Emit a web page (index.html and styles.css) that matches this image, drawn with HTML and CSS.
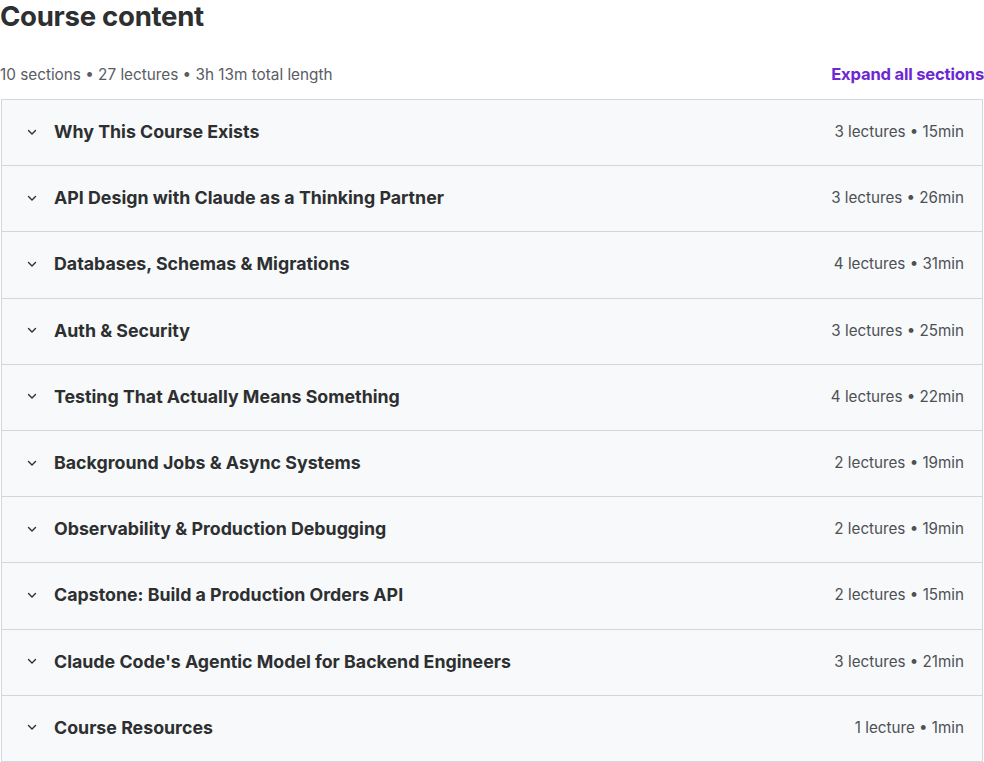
FILE: index.html
```html
<!DOCTYPE html>
<html>
<head>
<meta charset="utf-8">
<link rel="stylesheet" href="styles.css">
</head>
<body>
<div class="cc">
  <h2 class="cc-title">Course content</h2>
  <div class="cc-meta">
    <span class="cc-stats">10 sections • 27 lectures • 3h 13m total length</span>
    <button class="cc-expand">Expand all sections</button>
  </div>
  <div class="cc-list">
    <div class="sec"><span class="chev"><svg viewBox="0 0 12 12" width="12" height="12"><path d="M2.5 4.5 L6 8 L9.5 4.5" fill="none" stroke="#2d2f31" stroke-width="1.4" stroke-linecap="round" stroke-linejoin="round"/></svg></span><span class="sec-title">Why This Course Exists</span><span class="sec-info">3 lectures • 15min</span></div>
    <div class="sec"><span class="chev"><svg viewBox="0 0 12 12" width="12" height="12"><path d="M2.5 4.5 L6 8 L9.5 4.5" fill="none" stroke="#2d2f31" stroke-width="1.4" stroke-linecap="round" stroke-linejoin="round"/></svg></span><span class="sec-title">API Design with Claude as a Thinking Partner</span><span class="sec-info">3 lectures • 26min</span></div>
    <div class="sec"><span class="chev"><svg viewBox="0 0 12 12" width="12" height="12"><path d="M2.5 4.5 L6 8 L9.5 4.5" fill="none" stroke="#2d2f31" stroke-width="1.4" stroke-linecap="round" stroke-linejoin="round"/></svg></span><span class="sec-title">Databases, Schemas &amp; Migrations</span><span class="sec-info">4 lectures • 31min</span></div>
    <div class="sec"><span class="chev"><svg viewBox="0 0 12 12" width="12" height="12"><path d="M2.5 4.5 L6 8 L9.5 4.5" fill="none" stroke="#2d2f31" stroke-width="1.4" stroke-linecap="round" stroke-linejoin="round"/></svg></span><span class="sec-title">Auth &amp; Security</span><span class="sec-info">3 lectures • 25min</span></div>
    <div class="sec"><span class="chev"><svg viewBox="0 0 12 12" width="12" height="12"><path d="M2.5 4.5 L6 8 L9.5 4.5" fill="none" stroke="#2d2f31" stroke-width="1.4" stroke-linecap="round" stroke-linejoin="round"/></svg></span><span class="sec-title">Testing That Actually Means Something</span><span class="sec-info">4 lectures • 22min</span></div>
    <div class="sec"><span class="chev"><svg viewBox="0 0 12 12" width="12" height="12"><path d="M2.5 4.5 L6 8 L9.5 4.5" fill="none" stroke="#2d2f31" stroke-width="1.4" stroke-linecap="round" stroke-linejoin="round"/></svg></span><span class="sec-title">Background Jobs &amp; Async Systems</span><span class="sec-info">2 lectures • 19min</span></div>
    <div class="sec"><span class="chev"><svg viewBox="0 0 12 12" width="12" height="12"><path d="M2.5 4.5 L6 8 L9.5 4.5" fill="none" stroke="#2d2f31" stroke-width="1.4" stroke-linecap="round" stroke-linejoin="round"/></svg></span><span class="sec-title">Observability &amp; Production Debugging</span><span class="sec-info">2 lectures • 19min</span></div>
    <div class="sec"><span class="chev"><svg viewBox="0 0 12 12" width="12" height="12"><path d="M2.5 4.5 L6 8 L9.5 4.5" fill="none" stroke="#2d2f31" stroke-width="1.4" stroke-linecap="round" stroke-linejoin="round"/></svg></span><span class="sec-title">Capstone: Build a Production Orders API</span><span class="sec-info">2 lectures • 15min</span></div>
    <div class="sec"><span class="chev"><svg viewBox="0 0 12 12" width="12" height="12"><path d="M2.5 4.5 L6 8 L9.5 4.5" fill="none" stroke="#2d2f31" stroke-width="1.4" stroke-linecap="round" stroke-linejoin="round"/></svg></span><span class="sec-title">Claude Code's Agentic Model for Backend Engineers</span><span class="sec-info">3 lectures • 21min</span></div>
    <div class="sec"><span class="chev"><svg viewBox="0 0 12 12" width="12" height="12"><path d="M2.5 4.5 L6 8 L9.5 4.5" fill="none" stroke="#2d2f31" stroke-width="1.4" stroke-linecap="round" stroke-linejoin="round"/></svg></span><span class="sec-title">Course Resources</span><span class="sec-info">1 lecture • 1min</span></div>
  </div>
</div>
</body>
</html>
```
FILE: styles.css
```css
html, body {
  margin: 0;
  padding: 0;
  background: #ffffff;
}
body {
  font-family: "Inter", "Noto Sans", sans-serif;
  color: #2d2f31;
}
.cc {
  width: 984px;
}
.cc-title {
  margin: 0;
  font-size: 27.6px;
  font-weight: 700;
  line-height: 32px;
  letter-spacing: -0.3px;
  color: #2d2f31;
}
.cc-meta {
  display: flex;
  justify-content: space-between;
  align-items: center;
  margin-top: 27px;
  height: 30px;
  margin-bottom: 10px;
}
.cc-stats {
  font-size: 15.3px;
  color: #595c63;
}
.cc-expand {
  border: 0;
  background: none;
  padding: 0;
  font-family: inherit;
  font-size: 16.6px;
  font-weight: 700;
  letter-spacing: -0.2px;
  color: #6d28d2;
  cursor: pointer;
}
.cc-list {
  border: 1px solid #d1d7dc;
  border-top: 0;
  margin: 0 1px;
}
.sec {
  display: flex;
  align-items: center;
  height: 66.2px;
  box-sizing: border-box;
  background: #f7f9fa;
  border-top: 1px solid #d1d7dc;
  padding: 0 18px 2px 24px;
}
.chev {
  display: flex;
  width: 12px;
  height: 12px;
  margin-right: 16px;
}
.sec-title {
  flex: 1;
  font-size: 17.8px;
  font-weight: 700;
  color: #2d2f31;
}
.sec-info {
  font-size: 15.2px;
  color: #4d5055;
}
```
